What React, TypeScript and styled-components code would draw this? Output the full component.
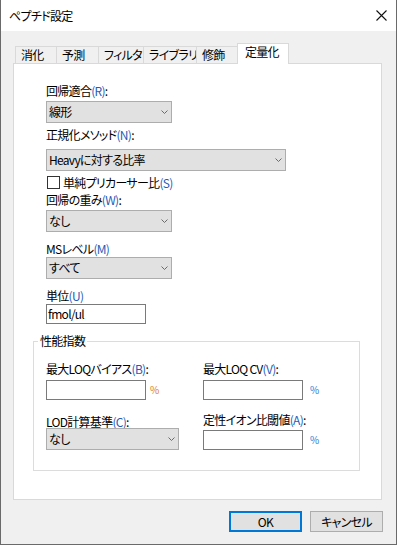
import styled, { createGlobalStyle } from "styled-components";

const GlobalStyle = createGlobalStyle`
  html, body {
    margin: 0;
    padding: 0;
    background: #fff;
  }
  body {
    font-family: "Noto Sans CJK JP", "Noto Sans", sans-serif;
    font-size: 12px;
    letter-spacing: -0.7px;
    color: #000;
    font-feature-settings: "palt";
  }
`;

const tabs = [
  { name: "消化", width: 42 },
  { name: "予測", width: 43 },
  { name: "フィルタ", width: 46 },
  { name: "ライブラリ", width: 54 },
  { name: "修飾", width: 42 },
  { name: "定量化", width: 52, active: true },
];

const Chevron = () => (
  <svg width="7" height="4" viewBox="0 0 7 4">
    <polyline points="0.5,0.5 3.5,3.5 6.5,0.5" fill="none" stroke="#6b6b6b" strokeWidth="1" />
  </svg>
);

const CloseIcon = () => (
  <svg width="11" height="11" viewBox="0 0 11 11">
    <path d="M0.5 0.5 L10.5 10.5 M10.5 0.5 L0.5 10.5" stroke="#111" strokeWidth="1.1" />
  </svg>
);

const App = () => {
  return (
    <>
      <GlobalStyle />
      <Window>
        <TitleBar>
          <Title>ペプチド設定</Title>
          <CloseButton>
            <CloseIcon />
          </CloseButton>
        </TitleBar>

        <Body>
          <TabStrip>
            {tabs.map((t) => (
              <Tab key={t.name} $w={t.width} $active={t.active}>
                {t.name}
              </Tab>
            ))}
          </TabStrip>

          <Panel>
            <TopSection>
              <Label>
                回帰適合<Mn>(R)</Mn>:
              </Label>
              <Select $w={126} $mt={3}>
                <span>線形</span>
                <Chevron />
              </Select>

              <Label $mt={5}>
                正規化メソッド<Mn>(N)</Mn>:
              </Label>
              <Select $w={240} $mt={7}>
                <span>Heavyに対する比率</span>
                <Chevron />
              </Select>

              <CheckRow>
                <CheckBox />
                <span>
                  単純プリカーサー比<Mn>(S)</Mn>
                </span>
              </CheckRow>

              <Label $mt={4}>
                回帰の重み<Mn>(W)</Mn>:
              </Label>
              <Select $w={126} $mt={3}>
                <span>なし</span>
                <Chevron />
              </Select>

              <Label $mt={10}>
                MSレベル<Mn>(M)</Mn>
              </Label>
              <Select $w={126} $mt={1}>
                <span>すべて</span>
                <Chevron />
              </Select>

              <Label $mt={10}>
                単位<Mn>(U)</Mn>
              </Label>
              <TextBox $mt={1}>fmol/ul</TextBox>
            </TopSection>

            <Group>
              <Legend>性能指数</Legend>
              <GroupGrid>
                <Cell>
                  <Label>
                    最大LOQバイアス<Mn>(B)</Mn>:
                  </Label>
                  <InputRow $mt={4}>
                    <TextBox />
                    <Percent $gap={4} $color="#d98214">%</Percent>
                  </InputRow>
                </Cell>
                <Cell>
                  <Label>
                    最大LOQ CV<Mn>(V)</Mn>:
                  </Label>
                  <InputRow $mt={4}>
                    <TextBox />
                    <Percent $gap={7} $color="#2f7fd0">%</Percent>
                  </InputRow>
                </Cell>
                <Cell>
                  <Label>
                    LOD計算基準<Mn>(C)</Mn>:
                  </Label>
                  <Select $w={133} $mt={-1}>
                    <span>なし</span>
                    <Chevron />
                  </Select>
                </Cell>
                <Cell>
                  <Label $mt={-2}>
                    定性イオン比閾値<Mn>(A)</Mn>:
                  </Label>
                  <InputRow $mt={3}>
                    <TextBox />
                    <Percent $gap={7} $color="#2f7fd0">%</Percent>
                  </InputRow>
                </Cell>
              </GroupGrid>
            </Group>
          </Panel>

          <Footer>
            <Button $primary>OK</Button>
            <Button>キャンセル</Button>
          </Footer>
        </Body>
      </Window>
    </>
  );
};

const Window = styled.div`
  box-sizing: border-box;
  width: 397px;
  height: 545px;
  border: 1px solid #6a6a6a;
  border-top: none;
  background: #f0f0f0;
  display: flex;
  flex-direction: column;
`;

const TitleBar = styled.div`
  height: 31px;
  flex-shrink: 0;
  background: #fff;
  display: flex;
  align-items: center;
  justify-content: space-between;
  padding: 0 9px 0 8px;
`;

const Title = styled.div`
  font-size: 12px;
  line-height: 16px;
`;

const CloseButton = styled.div`
  display: flex;
  align-items: center;
  height: 11px;
`;

const Body = styled.div`
  flex: 1;
  display: flex;
  flex-direction: column;
  padding: 12px 14px 12px 12px;
`;

const TabStrip = styled.div`
  display: flex;
  align-items: flex-end;
  height: 20px;
  padding-left: 2px;
  position: relative;
  z-index: 1;
`;

const Tab = styled.div<{ $w: number; $active?: boolean }>`
  box-sizing: border-box;
  width: ${(p) => p.$w}px;
  height: ${(p) => (p.$active ? 21 : 17)}px;
  margin-right: -1px;
  margin-bottom: ${(p) => (p.$active ? -1 : 0)}px;
  border: 1px solid #d9d9d9;
  border-bottom: none;
  background: ${(p) => (p.$active ? "#fff" : "#f0f0f0")};
  padding-left: ${(p) => (p.$active ? 7 : 5)}px;
  line-height: 16px;
  white-space: nowrap;
  overflow: hidden;
`;

const Panel = styled.div`
  box-sizing: border-box;
  height: 437px;
  border: 1px solid #d9d9d9;
  background: #fff;
  padding: 20px 21px 0 19px;
`;

const TopSection = styled.div`
  display: flex;
  flex-direction: column;
  align-items: flex-start;
  padding-left: 13px;
`;

const Label = styled.div<{ $mt?: number }>`
  height: 14px;
  line-height: 14px;
  white-space: nowrap;
  margin-top: ${(p) => p.$mt ?? 0}px;
`;

const Mn = styled.span`
  color: #1f5cb8;
`;

const Select = styled.div<{ $w: number; $mt?: number }>`
  box-sizing: border-box;
  width: ${(p) => p.$w}px;
  height: 22px;
  margin-top: ${(p) => p.$mt ?? 0}px;
  border: 1px solid #adadad;
  background: #e1e1e1;
  display: flex;
  align-items: center;
  justify-content: space-between;
  padding: 0 3px 0 2px;
  line-height: 16px;
  white-space: nowrap;
`;

const CheckRow = styled.div`
  display: flex;
  align-items: center;
  height: 14px;
  margin-top: 4px;
  gap: 3px;
  white-space: nowrap;
`;

const CheckBox = styled.div`
  box-sizing: border-box;
  width: 13px;
  height: 13px;
  margin-left: 1px;
  border: 1px solid #333;
  background: #fff;
`;

const TextBox = styled.div<{ $mt?: number }>`
  box-sizing: border-box;
  width: 100px;
  height: 20px;
  margin-top: ${(p) => p.$mt ?? 0}px;
  border: 1px solid #7a7a7a;
  background: #fff;
  padding-left: 1px;
  line-height: 18px;
  white-space: nowrap;
`;

const Group = styled.fieldset`
  box-sizing: border-box;
  width: 327px;
  min-width: 0;
  margin: 10px 0 0 0;
  padding: 14px 0 20px 12px;
  border: 1px solid #dcdcdc;
`;

const Legend = styled.legend`
  margin-left: -8px;
  padding: 0 2px;
  line-height: 14px;
  font-size: 12px;
`;

const GroupGrid = styled.div`
  display: grid;
  grid-template-columns: 157px 1fr;
  row-gap: 15px;
`;

const Cell = styled.div`
  display: flex;
  flex-direction: column;
  align-items: flex-start;
`;

const InputRow = styled.div<{ $mt?: number }>`
  display: flex;
  align-items: center;
  margin-top: ${(p) => p.$mt ?? 0}px;
`;

const Percent = styled.span<{ $gap: number; $color: string }>`
  margin-left: ${(p) => p.$gap}px;
  color: ${(p) => p.$color};
  font-size: 10px;
  line-height: 12px;
`;

const Footer = styled.div`
  display: flex;
  justify-content: flex-end;
  gap: 8px;
  margin-top: 11px;
  margin-right: -1px;
`;

const Button = styled.div<{ $primary?: boolean }>`
  box-sizing: border-box;
  width: 73px;
  height: 21px;
  border: ${(p) => (p.$primary ? "2px solid #0078d7" : "1px solid #adadad")};
  background: #e1e1e1;
  display: flex;
  align-items: center;
  justify-content: center;
  line-height: 16px;
`;

export default App;
